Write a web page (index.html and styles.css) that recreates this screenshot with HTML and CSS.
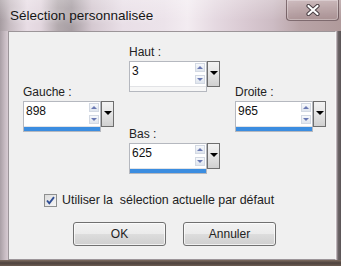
FILE: index.html
```html
<!DOCTYPE html>
<html lang="fr">
<head>
    <meta charset="UTF-8">
    <title>Sélection personnalisée</title>
    <link rel="stylesheet" href="styles.css">
</head>
<body>
    <div class="window">
        <div class="titlebar">
            <span class="title">Sélection personnalisée</span>
            <span class="close">
                <svg width="14" height="12" viewBox="0 0 14 12">
                    <path d="M2.5 2 L11.5 10 M11.5 2 L2.5 10" stroke="#4a3f44" stroke-width="4.2" stroke-linecap="round"/>
                    <path d="M2.5 2 L11.5 10 M11.5 2 L2.5 10" stroke="#ffffff" stroke-width="2.2" stroke-linecap="round"/>
                </svg>
            </span>
        </div>

        <div class="frame">
            <div class="client">
                <div class="fields">
                    <!-- Haut -->
                    <div class="field haut">
                        <span class="lbl">Haut :</span>
                        <div class="spin">
                            <div class="entry">
                                <div class="value-row">
                                    <span class="value">3</span>
                                    <span class="arrows"><i class="up"></i><i class="down"></i></span>
                                </div>
                                <div class="bar"></div>
                            </div>
                            <span class="drop"></span>
                        </div>
                    </div>

                    <!-- Gauche -->
                    <div class="field gauche">
                        <span class="lbl">Gauche :</span>
                        <div class="spin">
                            <div class="entry">
                                <div class="value-row">
                                    <span class="value">898</span>
                                    <span class="arrows"><i class="up"></i><i class="down"></i></span>
                                </div>
                                <div class="bar full"></div>
                            </div>
                            <span class="drop"></span>
                        </div>
                    </div>

                    <!-- Droite -->
                    <div class="field droite">
                        <span class="lbl">Droite :</span>
                        <div class="spin">
                            <div class="entry">
                                <div class="value-row">
                                    <span class="value">965</span>
                                    <span class="arrows"><i class="up"></i><i class="down"></i></span>
                                </div>
                                <div class="bar full"></div>
                            </div>
                            <span class="drop"></span>
                        </div>
                    </div>

                    <!-- Bas -->
                    <div class="field bas">
                        <span class="lbl">Bas :</span>
                        <div class="spin">
                            <div class="entry">
                                <div class="value-row">
                                    <span class="value">625</span>
                                    <span class="arrows"><i class="up"></i><i class="down"></i></span>
                                </div>
                                <div class="bar full"></div>
                            </div>
                            <span class="drop"></span>
                        </div>
                    </div>
                </div>

                <label class="check">
                    <span class="checkbox">
                        <svg width="13" height="13" viewBox="0 0 13 13">
                            <path d="M3 6.5 L5.3 9.3 L10 3.2" fill="none" stroke="#2f4d94" stroke-width="1.9"/>
                        </svg>
                    </span>
                    Utiliser la&nbsp; sélection actuelle par défaut
                </label>

                <div class="actions">
                    <button>OK</button>
                    <button>Annuler</button>
                </div>
            </div>
        </div>
    </div>
</body>
</html>
```

FILE: styles.css
```css
body {
    margin: 0;
    font-family: "Liberation Sans", Arial, sans-serif;
    font-size: 12px;
    color: #222;
}

.window {
    width: 341px;
    height: 266px;
    overflow: hidden;
    background:
        linear-gradient(180deg, rgba(255, 255, 255, 0.25) 0, rgba(255, 255, 255, 0) 20px),
        linear-gradient(90deg, #a69ca1 0, #c9bec4 3%, #e8dde5 8%, #e2d6de 12%, #b3aaae 17%, #a79ea3 21%, #d5c9d1 27%, #e9dfe7 36%, #ece3ea 48%, #f3ecf1 55%, #e5d9e1 63%, #d9c9d2 72%, #cdbcc4 80%, #b9a4a7 88%, #b09a9b 100%);
}

/* Title bar */
.titlebar {
    height: 31px;
    display: flex;
    align-items: flex-start;
}

.title {
    margin: 8px 0 0 10px;
    font-size: 13.5px;
    color: #161616;
    text-shadow: 0 0 6px rgba(255, 255, 255, 0.8);
}

.close {
    margin-left: auto;
    margin-right: 2px;
    width: 53px;
    height: 21px;
    box-sizing: border-box;
    border: 1px solid rgba(70, 50, 55, 0.55);
    border-top: none;
    border-radius: 0 0 4px 4px;
    background: linear-gradient(180deg, rgba(205, 185, 188, 0.6), rgba(165, 140, 142, 0.7));
    box-shadow: inset 0 0 0 1px rgba(255, 255, 255, 0.3);
    display: flex;
    align-items: center;
    justify-content: center;
}

/* Window frame */
.frame {
    height: 235px;
    padding: 0 5px 6px 8px;
    background:
        linear-gradient(180deg, rgba(0, 0, 0, 0) 229px, #7d6b5e 229px, #4e433e 232px, #6b5b50 235px),
        linear-gradient(90deg, #a99fa5 0, #c8bcc3 5px, #d6cad1 8px, #d9ced5 336px, #6d6668 338px, #5a5456 341px);
}

.client {
    height: 229px;
    box-sizing: border-box;
    background-color: #f0f0f0;
    border: 1px solid #9c9599;
    border-right-color: #f7f7f7;
}

/* Spin fields */
.fields {
    display: grid;
    grid-template-columns: repeat(3, 91px);
    grid-template-rows: 40px 42px 42px auto;
    column-gap: 15px;
    margin: 13px 0 0 14px;
}

.field {
    display: flex;
    flex-direction: column;
    gap: 2px;
}

.haut { grid-column: 2; grid-row: 1 / 3; }
.gauche { grid-column: 1; grid-row: 2 / 4; }
.droite { grid-column: 3; grid-row: 2 / 4; }
.bas { grid-column: 2; grid-row: 3 / 5; }

.lbl {
    line-height: 14px;
}

.spin {
    display: flex;
    align-items: flex-start;
}

.entry {
    width: 78px;
    height: 31px;
    box-sizing: border-box;
    border: 1px solid #b5b8bf;
    background-color: #fff;
}

.value-row {
    height: 25px;
    display: flex;
    align-items: flex-start;
    border-bottom: 1px solid #e2e3e6;
    box-sizing: border-box;
}

.value {
    padding: 2px 0 0 2px;
    line-height: 14px;
    color: #111;
}

.arrows {
    margin: 1px 1px 0 auto;
    display: flex;
    flex-direction: column;
    gap: 3px;
}

.arrows i {
    width: 10px;
    height: 9px;
    box-sizing: border-box;
    border: 1px solid #d3d9e3;
    background: linear-gradient(180deg, #f7f9fc, #dfe5ee);
    display: flex;
    align-items: center;
    justify-content: center;
}

.up::after {
    content: "";
    border-left: 3px solid transparent;
    border-right: 3px solid transparent;
    border-bottom: 3px solid #6a79b3;
}

.down::after {
    content: "";
    border-left: 3px solid transparent;
    border-right: 3px solid transparent;
    border-top: 3px solid #6a79b3;
}

.bar {
    height: 4px;
    background-color: #f7f7f7;
}

.bar.full {
    background-color: #3b8de0;
}

.drop {
    width: 13px;
    height: 26px;
    box-sizing: border-box;
    border: 1px solid #6e6e6e;
    background: linear-gradient(180deg, #f3f3f3, #e4e4e4 50%, #d0d0d0);
    display: flex;
    justify-content: center;
    padding-top: 9px;
}

.drop::after {
    content: "";
    height: 0;
    border-left: 4px solid transparent;
    border-right: 4px solid transparent;
    border-top: 4px solid #000;
}

/* Checkbox */
.check {
    display: flex;
    align-items: center;
    gap: 5px;
    height: 15px;
    line-height: 15px;
    font-size: 12.4px;
    margin: 19px 0 0 35px;
}

.checkbox {
    width: 13px;
    height: 13px;
    box-sizing: border-box;
    border: 1px solid #8e8f8f;
    background: linear-gradient(135deg, #dcdcdc, #f6f6f6);
    display: flex;
}

.checkbox svg {
    margin: -1px;
}

/* Buttons */
.actions {
    display: flex;
    gap: 17px;
    margin: 14px 0 0 64px;
}

button {
    width: 93px;
    height: 24px;
    font-family: "Liberation Sans", Arial, sans-serif;
    font-size: 12px;
    color: #222;
    border: 1px solid #707070;
    border-radius: 3px;
    background: linear-gradient(180deg, #f2f2f2 0, #ebebeb 50%, #dddddd 50%, #cfcfcf 100%);
    box-shadow: inset 0 0 0 1px rgba(255, 255, 255, 0.7);
    padding: 0;
}
```
